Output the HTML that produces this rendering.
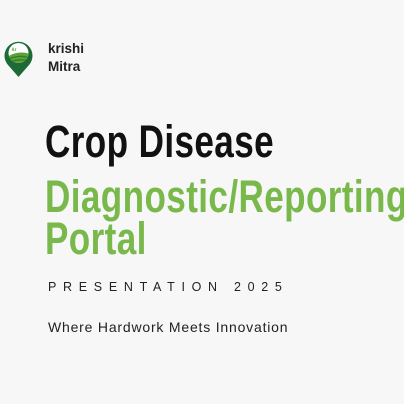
<!DOCTYPE html>
<html><head><style>
html,body{margin:0;padding:0;}
body{width:404px;height:404px;background:#f7f7f7;position:relative;overflow:hidden;font-family:"Liberation Sans",sans-serif;}
.t{position:absolute;white-space:nowrap;}
.big{font-weight:bold;font-size:45px;line-height:45px;transform:scaleX(0.78);transform-origin:0 0;letter-spacing:0.5px;}
</style></head><body>
<svg style="position:absolute;left:1.5px;top:31px" width="34" height="48" viewBox="0 0 34 48">
<path d="M16.5 46 L6 34 A14 14 0 1 1 27 34 Z" fill="#1d6a37"/>
<circle cx="16.5" cy="22" r="10" fill="#fff"/>
<clipPath id="c"><circle cx="16.5" cy="22" r="10"/></clipPath>
<g clip-path="url(#c)">
<path d="M5 26 Q16 19 28 23 L28 34 L5 34Z" fill="#5aa338"/>
<path d="M5 29 Q16 23 28 27" stroke="#2f7d2f" stroke-width="1.2" fill="none"/>
<path d="M5 32 Q16 27 28 30" stroke="#2f7d2f" stroke-width="1.2" fill="none"/>
<path d="M10 20 l1-3 l1 3 M13 20 l1-3" stroke="#6aa84f" stroke-width="0.8" fill="none"/>
</g>
</svg>
<div class="t" style="left:48px;top:40px;font-size:13.5px;font-weight:bold;line-height:18px;color:#222;">krishi<br>Mitra</div>
<div class="t big" style="left:45px;top:119px;color:#111;">Crop Disease</div>
<div class="t big" style="left:45px;top:174px;color:#79b84a;">Diagnostic/Reporting</div>
<div class="t big" style="left:45px;top:216px;color:#79b84a;">Portal</div>
<div class="t" style="left:48px;top:280px;font-size:12.5px;letter-spacing:6.7px;color:#222;">PRESENTATION 2025</div>
<div class="t" style="left:48px;top:319px;font-size:14px;letter-spacing:0.8px;color:#222;">Where Hardwork Meets Innovation</div>
</body></html>
